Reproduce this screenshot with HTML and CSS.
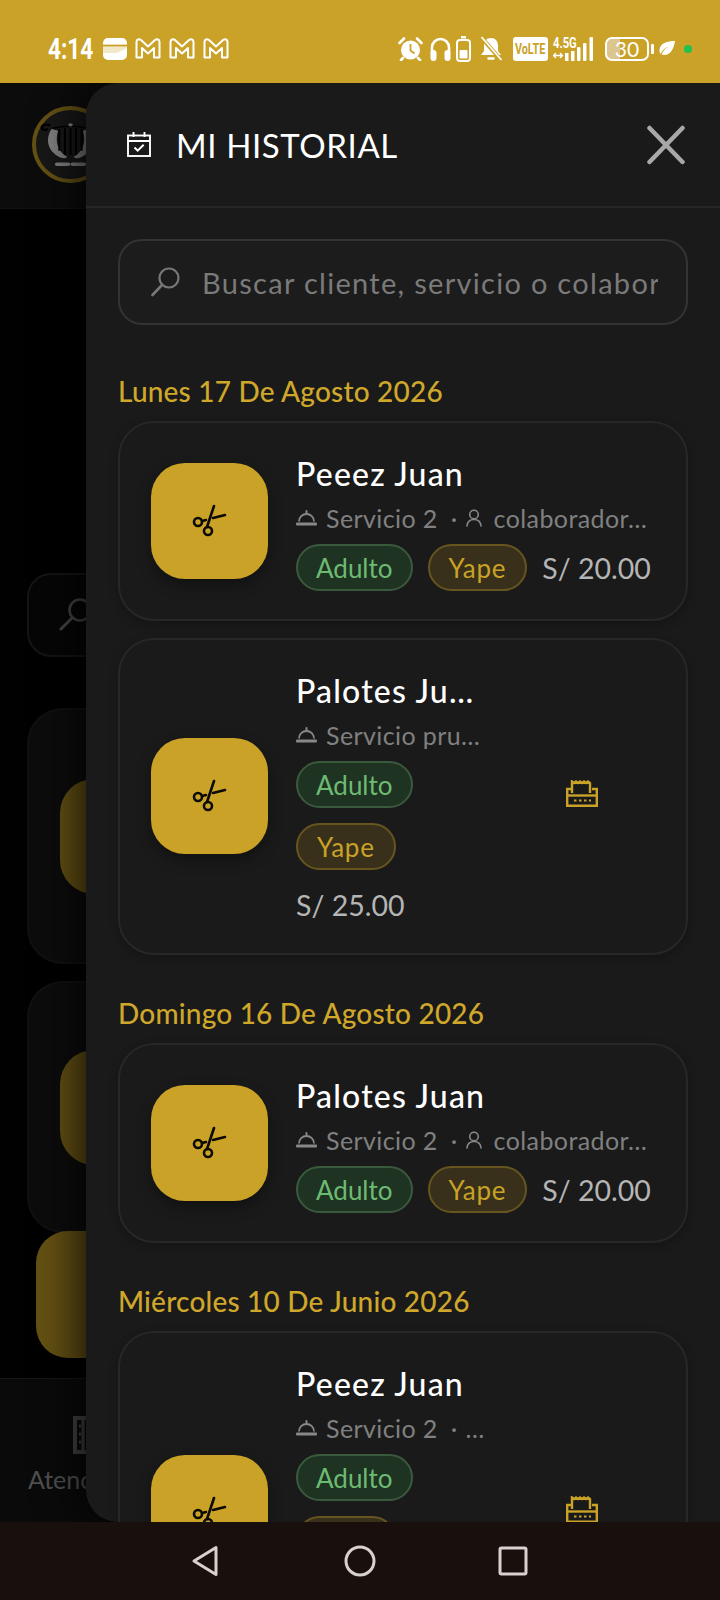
FILE: index.html
```html
<!DOCTYPE html>
<html lang="es">
<head>
  <meta charset="UTF-8" />
  <meta name="viewport" content="width=device-width, initial-scale=1.0"/>
  <title>Mi Historial</title>
  <link rel="stylesheet" href="styles.css">
</head>
<body>
  <svg class="defs" width="0" height="0">
    <symbol id="gmail" viewBox="0 0 26 21">
      <path d="M1.500 19.500V4C1.500 1.500 4 .5 6 2l7 6.500L20 2c2-1.500 4.500-.5 4.500 2v15.500h-5.500V10l-6 5.500L7 10v9.500z" fill="none" stroke="#fff" stroke-width="2" stroke-linejoin="round"/>
    </symbol>
    <symbol id="scissors" viewBox="0 0 36 36">
      <g fill="none" stroke="#0c0a04" stroke-width="2.600" stroke-linecap="round">
        <circle cx="6" cy="19" r="4"/>
        <circle cx="16" cy="28" r="4"/>
        <path d="M15 24 L22 3"/>
        <path d="M10 18 L14 17"/>
        <path d="M21 15 L33 12"/>
      </g>
    </symbol>
    <symbol id="bell" viewBox="0 0 21 16">
      <path d="M10.500 1v2" stroke="#888" stroke-width="2" stroke-linecap="round"/>
      <path d="M3 11.500a7.500 7.500 0 0 1 15 0" fill="none" stroke="#888" stroke-width="1.800"/>
      <rect x="0" y="12.500" width="21" height="3" rx="1" fill="#888"/>
    </symbol>
    <symbol id="person" viewBox="0 0 16 18">
      <circle cx="8" cy="5.500" r="4.300" fill="none" stroke="#888" stroke-width="1.600"/>
      <path d="M1 17c.4-4 3-6.500 7-6.500s6.600 2.500 7 6.500" fill="none" stroke="#888" stroke-width="1.600" stroke-linecap="round"/>
    </symbol>
    <symbol id="receipt" viewBox="0 0 32 27">
      <g fill="none" stroke="#c9a227" stroke-width="2.400">
        <path d="M6 13V1.500l2 1.500 2-1.500 2 1.500 2-1.500 2 1.500 2-1.500 2 1.500 2-1.500 2 1.500V13"/>
        <path d="M6 9H1.200v16.800h29.600V9H26"/>
        <path d="M1 15.500h30"/>
      </g>
      <path d="M8 20.500h2.500M13 20.500h2.500M18 20.500h2.500M23 20.500h2" stroke="#c9a227" stroke-width="2.200"/>
    </symbol>
  </svg>

  <div class="status-bar">
    <div class="status-left">
      <span class="clock">4:14</span>
      <svg width="24" height="22" viewBox="0 0 24 22"><path d="M5 0h14a5 5 0 0 1 5 5v12a5 5 0 0 1-5 5H5a5 5 0 0 1-5-5V5a5 5 0 0 1 5-5z" fill="#fff"/><path d="M0 8h24v2L14 15H0z" fill="#c9a227" opacity=".25"/><path d="M0 7.500h24" stroke="#c9a227" stroke-width="1.800"/></svg>
      <svg class="gmail" width="26" height="21"><use href="#gmail"/></svg>
      <svg class="gmail" width="26" height="21"><use href="#gmail"/></svg>
      <svg class="gmail" width="26" height="21"><use href="#gmail"/></svg>
    </div>
    <div class="status-right">
      <svg class="status-alarm" width="25" height="24" viewBox="0 0 25 24"><circle cx="12.500" cy="13" r="9.500" fill="#fff"/><path d="M12.500 7v6.500l4 3" fill="none" stroke="#c9a227" stroke-width="1.800"/><path d="M1.500 6 6 1.500M23.500 6 19 1.500M5 21l-2 2M20 21l2 2" stroke="#fff" stroke-width="2.600" stroke-linecap="round"/></svg>
      <div class="status-pair">
        <svg width="21" height="24" viewBox="0 0 21 24"><path d="M2 17V10.500a8.500 8.500 0 0 1 17 0V17" fill="none" stroke="#fff" stroke-width="2.600"/><rect x="0.500" y="13" width="6" height="11" rx="3" fill="#fff"/><rect x="14.500" y="13" width="6" height="11" rx="3" fill="#fff"/></svg>
        <svg width="15" height="26" viewBox="0 0 15 26"><rect x="5" y="0" width="5" height="2.500" fill="#fff"/><rect x="1" y="4" width="13" height="21" rx="3" fill="none" stroke="#fff" stroke-width="2"/><rect x="3.500" y="14" width="8" height="8.500" rx="1" fill="#fff"/></svg>
      </div>
      <svg class="status-mute" width="22" height="26" viewBox="0 0 22 26"><path d="M11 2c-4.500 0-7 3.200-7 7.500V15l-3 4h20l-3-4V9.500C18 5.200 15.500 2 11 2z" fill="#fff"/><path d="M8.500 22.500h5" stroke="#fff" stroke-width="2.400" stroke-linecap="round"/><path d="M1 1l20 23" stroke="#c9a227" stroke-width="4"/><path d="M1.500 1l20 23" stroke="#fff" stroke-width="1.800"/></svg>
      <div class="status-pair">
        <span class="volte"><span class="squeezed">VoLTE</span></span>
        <div class="network">
          <span class="network-type">4.5G</span>
          <svg width="41" height="24" viewBox="0 0 41 24"><path d="M1 18.500h8M3 16l-2.500 2.500L3 21M7 16l2.500 2.500L7 21" stroke="#fff" stroke-width="1.400" fill="none"/><rect x="12" y="16" width="3.500" height="8" fill="#fff"/><rect x="18" y="14" width="3.500" height="10" fill="#fff"/><rect x="24" y="10" width="3.500" height="14" rx="1" fill="#fff"/><rect x="30" y="6" width="3.500" height="18" rx="1" fill="#fff"/><rect x="36.500" y="0" width="3.500" height="24" rx="1" fill="#fff"/></svg>
        </div>
      </div>
      <div class="status-pair">
        <div class="battery"><span class="battery-num">30</span></div>
        <svg width="17" height="15" viewBox="0 0 17 15"><path d="M17 0C9 0 2 2 1.500 9c-.1 1.500.3 3 1 4 2-4 5-6.500 8-7.500-3 2-5.500 4.500-7 8 7 2 12-3 13.500-13.500z" fill="#fff"/></svg>
      </div>
      <span class="status-dot"></span>
    </div>
  </div>

  <div class="app">
    <div class="page">
      <div class="page-header">
        <div class="logo">
          <svg width="67" height="52" viewBox="0 0 60 62" preserveAspectRatio="none">
            <path d="M12 8c-4-3-9 0-7 4 1.500 2 4 1 3.500-1" fill="none" stroke="#000" stroke-width="2.500"/>
            <path d="M13 12c-5 10-5 26 8 34 3 1.500 5 1 6-1-9-6-11-20-8-31z" fill="#fff"/>
            <path d="M47 12c5 10 5 26-8 34-3 1.500-5 1-6-1 9-6 11-20 8-31z" fill="#fff"/>
            <path d="M14 11c10-3 22-3 32 0M20 12v26M25 11v32M30 11v32M35 11v32M40 12v26" stroke="#000" stroke-width="1.800" fill="none"/>
            <path d="M18 54h10M32 54h10" stroke="#fff" stroke-width="4" stroke-linecap="round"/>
            <circle cx="30" cy="7" r="2" fill="#fff"/>
          </svg>
        </div>
      </div>
      <div class="page-main">
        <div class="page-search">
          <svg width="34" height="34" viewBox="0 0 34 34"><circle cx="21" cy="12" r="10.500" fill="none" stroke="#888" stroke-width="2.500"/><path d="M13 20 2 31" stroke="#888" stroke-width="3" stroke-linecap="round"/></svg>
        </div>
        <div class="page-card"><div class="page-thumb"></div></div>
        <div class="page-card page-card-short"><div class="page-thumb"></div></div>
        <div class="page-action"></div>
      </div>
      <div class="page-nav">
        <svg width="40" height="38" viewBox="0 0 40 38"><rect x="2" y="2" width="36" height="34" fill="none" stroke="#888" stroke-width="4"/><path d="M10 2v34" stroke="#888" stroke-width="3"/><path d="M6 10h2M6 18h2M6 26h2M18 12h4M18 20h4M18 28h4" stroke="#888" stroke-width="3"/></svg>
        <span>Atención</span>
      </div>
      <div class="scrim"></div>
    </div>

    <div class="drawer">
      <div class="drawer-header">
        <div class="drawer-title">
          <svg width="24" height="25" viewBox="0 0 24 25"><g fill="none" stroke="#fff" stroke-width="1.900"><rect x="1" y="3.500" width="22" height="20.500"/><path d="M1 9h22M6.500 0v5M17.500 0v5"/><path d="M7.500 15.500l3.200 3.200 6-6" stroke-width="2"/></g></svg>
          <h2>MI HISTORIAL</h2>
        </div>
        <svg class="close" width="38" height="40" viewBox="0 0 38 40"><path d="M2.500 3l33 34M35.500 3l-33 34" stroke="#a8a8a8" stroke-width="4.500" stroke-linecap="round"/></svg>
      </div>

      <div class="drawer-body">
        <div class="search">
          <svg width="30" height="30" viewBox="0 0 30 30"><circle cx="18" cy="11" r="9.500" fill="none" stroke="#777" stroke-width="2.200"/><path d="M11 18 1.500 28" stroke="#777" stroke-width="2.600" stroke-linecap="round"/></svg>
          <input type="text" placeholder="Buscar cliente, servicio o colaborador">
        </div>

        <div class="day-title">Lunes 17 De Agosto 2026</div>
        <div class="card">
          <div class="thumb"><svg width="36" height="36"><use href="#scissors"/></svg></div>
          <div class="info">
            <div class="name">Peeez Juan</div>
            <div class="meta">
              <svg width="21" height="16"><use href="#bell"/></svg>
              <span>Servicio 2</span>
              <span class="sep">·</span>
              <svg class="person" width="16" height="18"><use href="#person"/></svg>
              <span>colaborador…</span>
            </div>
            <div class="tags">
              <span class="chip chip-green">Adulto</span>
              <span class="chip chip-gold">Yape</span>
              <span class="price">S/ 20.00</span>
            </div>
          </div>
        </div>

        <div class="card">
          <div class="thumb"><svg width="36" height="36"><use href="#scissors"/></svg></div>
          <div class="info info-narrow">
            <div class="name">Palotes Ju…</div>
            <div class="meta">
              <svg width="21" height="16"><use href="#bell"/></svg>
              <span>Servicio pru…</span>
            </div>
            <div class="tags">
              <span class="chip chip-green">Adulto</span>
              <span class="chip chip-gold">Yape</span>
              <span class="price">S/ 25.00</span>
            </div>
          </div>
          <div class="card-action"><svg width="32" height="27"><use href="#receipt"/></svg></div>
        </div>

        <div class="day-title">Domingo 16 De Agosto 2026</div>
        <div class="card">
          <div class="thumb"><svg width="36" height="36"><use href="#scissors"/></svg></div>
          <div class="info">
            <div class="name">Palotes Juan</div>
            <div class="meta">
              <svg width="21" height="16"><use href="#bell"/></svg>
              <span>Servicio 2</span>
              <span class="sep">·</span>
              <svg class="person" width="16" height="18"><use href="#person"/></svg>
              <span>colaborador…</span>
            </div>
            <div class="tags">
              <span class="chip chip-green">Adulto</span>
              <span class="chip chip-gold">Yape</span>
              <span class="price">S/ 20.00</span>
            </div>
          </div>
        </div>

        <div class="day-title">Miércoles 10 De Junio 2026</div>
        <div class="card">
          <div class="thumb"><svg width="36" height="36"><use href="#scissors"/></svg></div>
          <div class="info info-narrow info-tall">
            <div class="name">Peeez Juan</div>
            <div class="meta">
              <svg width="21" height="16"><use href="#bell"/></svg>
              <span>Servicio 2</span>
              <span class="sep">·</span>
              <span>…</span>
            </div>
            <div class="tags">
              <span class="chip chip-green">Adulto</span>
              <span class="chip chip-gold">Yape</span>
              <span class="price">S/ 20.00</span>
            </div>
          </div>
          <div class="card-action"><svg width="32" height="27"><use href="#receipt"/></svg></div>
        </div>
      </div>
    </div>
  </div>

  <div class="nav-bar">
    <svg width="31" height="32" viewBox="0 0 31 32"><path d="M25 2.500V29.500L3 16z" fill="none" stroke="#d8d2cf" stroke-width="3" stroke-linejoin="round"/></svg>
    <svg width="32" height="32" viewBox="0 0 32 32"><circle cx="16" cy="16" r="14" fill="none" stroke="#d8d2cf" stroke-width="3"/></svg>
    <svg width="30" height="30" viewBox="0 0 30 30"><rect x="2" y="2" width="26" height="26" rx="1.500" fill="none" stroke="#d8d2cf" stroke-width="3"/></svg>
  </div>
</body>
</html>
```

FILE: styles.css
```css
* {
  box-sizing: border-box;
}

html, body {
  margin: 0;
  height: 100%;
}

body {
  width: 720px;
  height: 1600px;
  display: flex;
  flex-direction: column;
  overflow: hidden;
  background-color: #000;
  font-family: 'Lato', 'Noto Sans', sans-serif;
}

.defs {
  position: absolute;
}

/* phone status bar */
.status-bar {
  height: 83px;
  flex: none;
  display: flex;
  justify-content: space-between;
  align-items: center;
  padding: 14px 28px 0 48px;
  background-color: #c9a227;
  color: #fff;
}

.status-left, .status-right, .status-pair {
  display: flex;
  align-items: center;
}

.status-left {
  gap: 8px;
}

.status-right {
  gap: 9px;
}

.status-pair {
  gap: 5px;
}

.status-alarm {
  margin-right: -2px;
}

.status-mute {
  margin-right: 2px;
}

.clock {
  display: block;
  width: 47px;
  font-family: 'Roboto', sans-serif;
  font-size: 29px;
  font-weight: bold;
  line-height: 30px;
  white-space: nowrap;
  transform: scaleX(0.78);
  transform-origin: left center;
}

.volte {
  width: 35px;
  height: 24px;
  display: flex;
  align-items: center;
  justify-content: center;
  border-radius: 3px;
  background-color: #fff;
  color: #c9a227;
  font-family: 'Roboto', sans-serif;
  font-size: 15px;
  font-weight: bold;
}

.squeezed {
  display: block;
  transform: scaleX(0.72);
}

.network {
  position: relative;
  width: 41px;
  height: 24px;
  margin-right: 2px;
}

.network-type {
  position: absolute;
  left: 0;
  top: -1px;
  font-family: 'Roboto', sans-serif;
  font-size: 14px;
  font-weight: bold;
  line-height: 14px;
  transform: scaleX(0.8);
  transform-origin: left center;
}

.battery {
  position: relative;
  width: 44px;
  height: 24px;
  margin-right: 4px;
  border: 2px solid #fff;
  border-radius: 7px;
  text-align: center;
  background: linear-gradient(90deg, #dcc68f 32%, transparent 32%);
}

.battery::after {
  content: "";
  position: absolute;
  right: -7px;
  top: 5px;
  width: 3px;
  height: 10px;
  background-color: #fff;
  border-radius: 1px;
}

.battery-num {
  display: block;
  font-size: 21px;
  line-height: 20px;
  color: #fff;
}

.status-dot {
  width: 8px;
  height: 8px;
  border-radius: 50%;
  background-color: #1fc24f;
}

/* the screen under the drawer */
.app {
  position: relative;
  flex: 1;
  min-height: 0;
  overflow: hidden;
}

.page {
  height: 100%;
  display: flex;
  flex-direction: column;
  background-color: #020202;
}

.page-header {
  height: 126px;
  display: flex;
  align-items: center;
  padding-left: 32px;
  padding-bottom: 2px;
  background-color: #181818;
  border-bottom: 1px solid #262626;
}

.logo {
  width: 77px;
  height: 77px;
  display: flex;
  align-items: center;
  justify-content: center;
  border: 4px solid #c9a227;
  border-radius: 50%;
  background-color: #2e2e2e;
}

.logo svg {
  flex: none;
}

.page-main {
  padding: 364px 0 0 27px;
}

.page-search {
  height: 84px;
  display: flex;
  align-items: center;
  padding-left: 30px;
  border: 2px solid #2a2a2a;
  border-radius: 24px;
  background-color: #0c0c0c;
}

.page-card {
  height: 256px;
  margin-top: 51px;
  display: flex;
  align-items: center;
  padding-left: 31px;
  border: 2px solid #222;
  border-radius: 36px;
  background-color: #181818;
}

.page-card-short {
  margin-top: 17px;
  height: 252px;
}

.page-thumb {
  width: 200px;
  height: 115px;
  border-radius: 34px;
  background-color: #c9a227;
}

.page-action {
  width: 300px;
  height: 127px;
  margin-top: -2px;
  margin-left: 9px;
  border-radius: 32px;
  background-color: #c9a227;
}

.page-nav {
  margin-top: auto;
  height: 144px;
  display: flex;
  flex-direction: column;
  padding: 37px 0 0 28px;
  border-top: 1px solid #2c2c2c;
  background-color: #151515;
  color: #a0a0a0;
  font-size: 25px;
}

.page-nav svg {
  margin-left: 45px;
}

.page-nav span {
  margin-top: 10px;
}

.scrim {
  position: absolute;
  inset: 0;
  background-color: rgba(0, 0, 0, 0.5);
}

/* historial drawer */
.drawer {
  position: absolute;
  top: 0;
  bottom: 0;
  left: 86px;
  right: 0;
  display: flex;
  flex-direction: column;
  overflow: hidden;
  background-color: #1a1a1a;
  border-radius: 32px 0 0 32px;
  box-shadow: -8px 0 44px rgba(0, 0, 0, 0.75);
}

.drawer-header {
  height: 125px;
  flex: none;
  display: flex;
  align-items: center;
  justify-content: space-between;
  padding: 0 35px 0 41px;
  border-bottom: 2px solid #262626;
}

.drawer-title {
  display: flex;
  align-items: center;
  gap: 25px;
}

.drawer-title h2 {
  margin: 0;
  color: #fff;
  font-size: 33px;
  font-weight: 400;
  letter-spacing: 0.6px;
}

.drawer-body {
  padding: 31px 32px 0;
}

.search {
  height: 86px;
  display: flex;
  align-items: center;
  gap: 21px;
  padding: 0 28px 0 31px;
  border: 2px solid #333;
  border-radius: 24px;
  background-color: #1c1c1c;
}

.search svg {
  flex: none;
}

.search input {
  flex: 1;
  min-width: 0;
  padding: 0;
  border: none;
  outline: none;
  background: transparent;
  color: #fff;
  font-family: inherit;
  font-size: 29px;
  letter-spacing: 1.3px;
}

.search input::placeholder {
  color: #7a7a7a;
  opacity: 1;
}

.day-title {
  margin: 41px 0 13px;
  color: #cfa72b;
  font-size: 28px;
  font-weight: 500;
  line-height: 34px;
  letter-spacing: 0.2px;
}

.search + .day-title {
  margin-top: 49px;
  margin-bottom: 12.500px;
}

.card {
  display: flex;
  align-items: center;
  gap: 28px;
  padding: 27.500px 31px;
  margin-bottom: 17px;
  border: 2px solid #272727;
  border-radius: 36px;
  background-color: #1a1a1a;
  box-shadow: 0 3px 10px rgba(0, 0, 0, 0.25);
}

.card:last-child {
  margin-bottom: 0;
}

.thumb {
  width: 117px;
  height: 116px;
  flex: none;
  display: flex;
  align-items: center;
  justify-content: center;
  border-radius: 34px;
  background-color: #c9a227;
  box-shadow: 0 6px 14px rgba(0, 0, 0, 0.35);
}

.info {
  flex: 1;
  min-width: 0;
}

.info-narrow {
  flex: none;
  width: 180px;
}

/* last card runs on under the nav bar */
.info-tall {
  padding-bottom: 47px;
}

.name {
  color: #fff;
  font-size: 32px;
  font-weight: 500;
  line-height: 48px;
  letter-spacing: 1.2px;
  white-space: nowrap;
}

.meta {
  display: flex;
  align-items: center;
  gap: 9px;
  margin-top: 5px;
  color: #808080;
  font-size: 25px;
  line-height: 30px;
  letter-spacing: 0.4px;
  white-space: nowrap;
}

.meta svg {
  flex: none;
}

.sep {
  margin: 0 -1px 0 4px;
}

.person {
  margin-right: 3px;
}

.tags {
  display: flex;
  flex-wrap: wrap;
  align-items: center;
  gap: 15px;
  margin-top: 11px;
}

.chip {
  height: 47px;
  display: flex;
  align-items: center;
  border: 2px solid;
  border-radius: 24px;
  font-size: 26px;
}

.chip-green {
  padding: 0 18px;
  background-color: #1f3322;
  border-color: #3a5a3e;
  color: #6dbb72;
}

.chip-gold {
  padding: 0 19px;
  background-color: #38301a;
  border-color: #675520;
  color: #c9a227;
  letter-spacing: 0.8px;
}

.price {
  color: #b5b5b5;
  font-size: 28.500px;
  line-height: 40px;
  white-space: nowrap;
}

.card-action {
  flex: 1;
  display: flex;
  justify-content: center;
  padding-left: 4px;
  margin-bottom: 6px;
}

/* android buttons */
.nav-bar {
  height: 78px;
  flex: none;
  display: flex;
  align-items: center;
  padding-left: 191px;
  gap: 122px;
  background-color: #190f0c;
}
```
